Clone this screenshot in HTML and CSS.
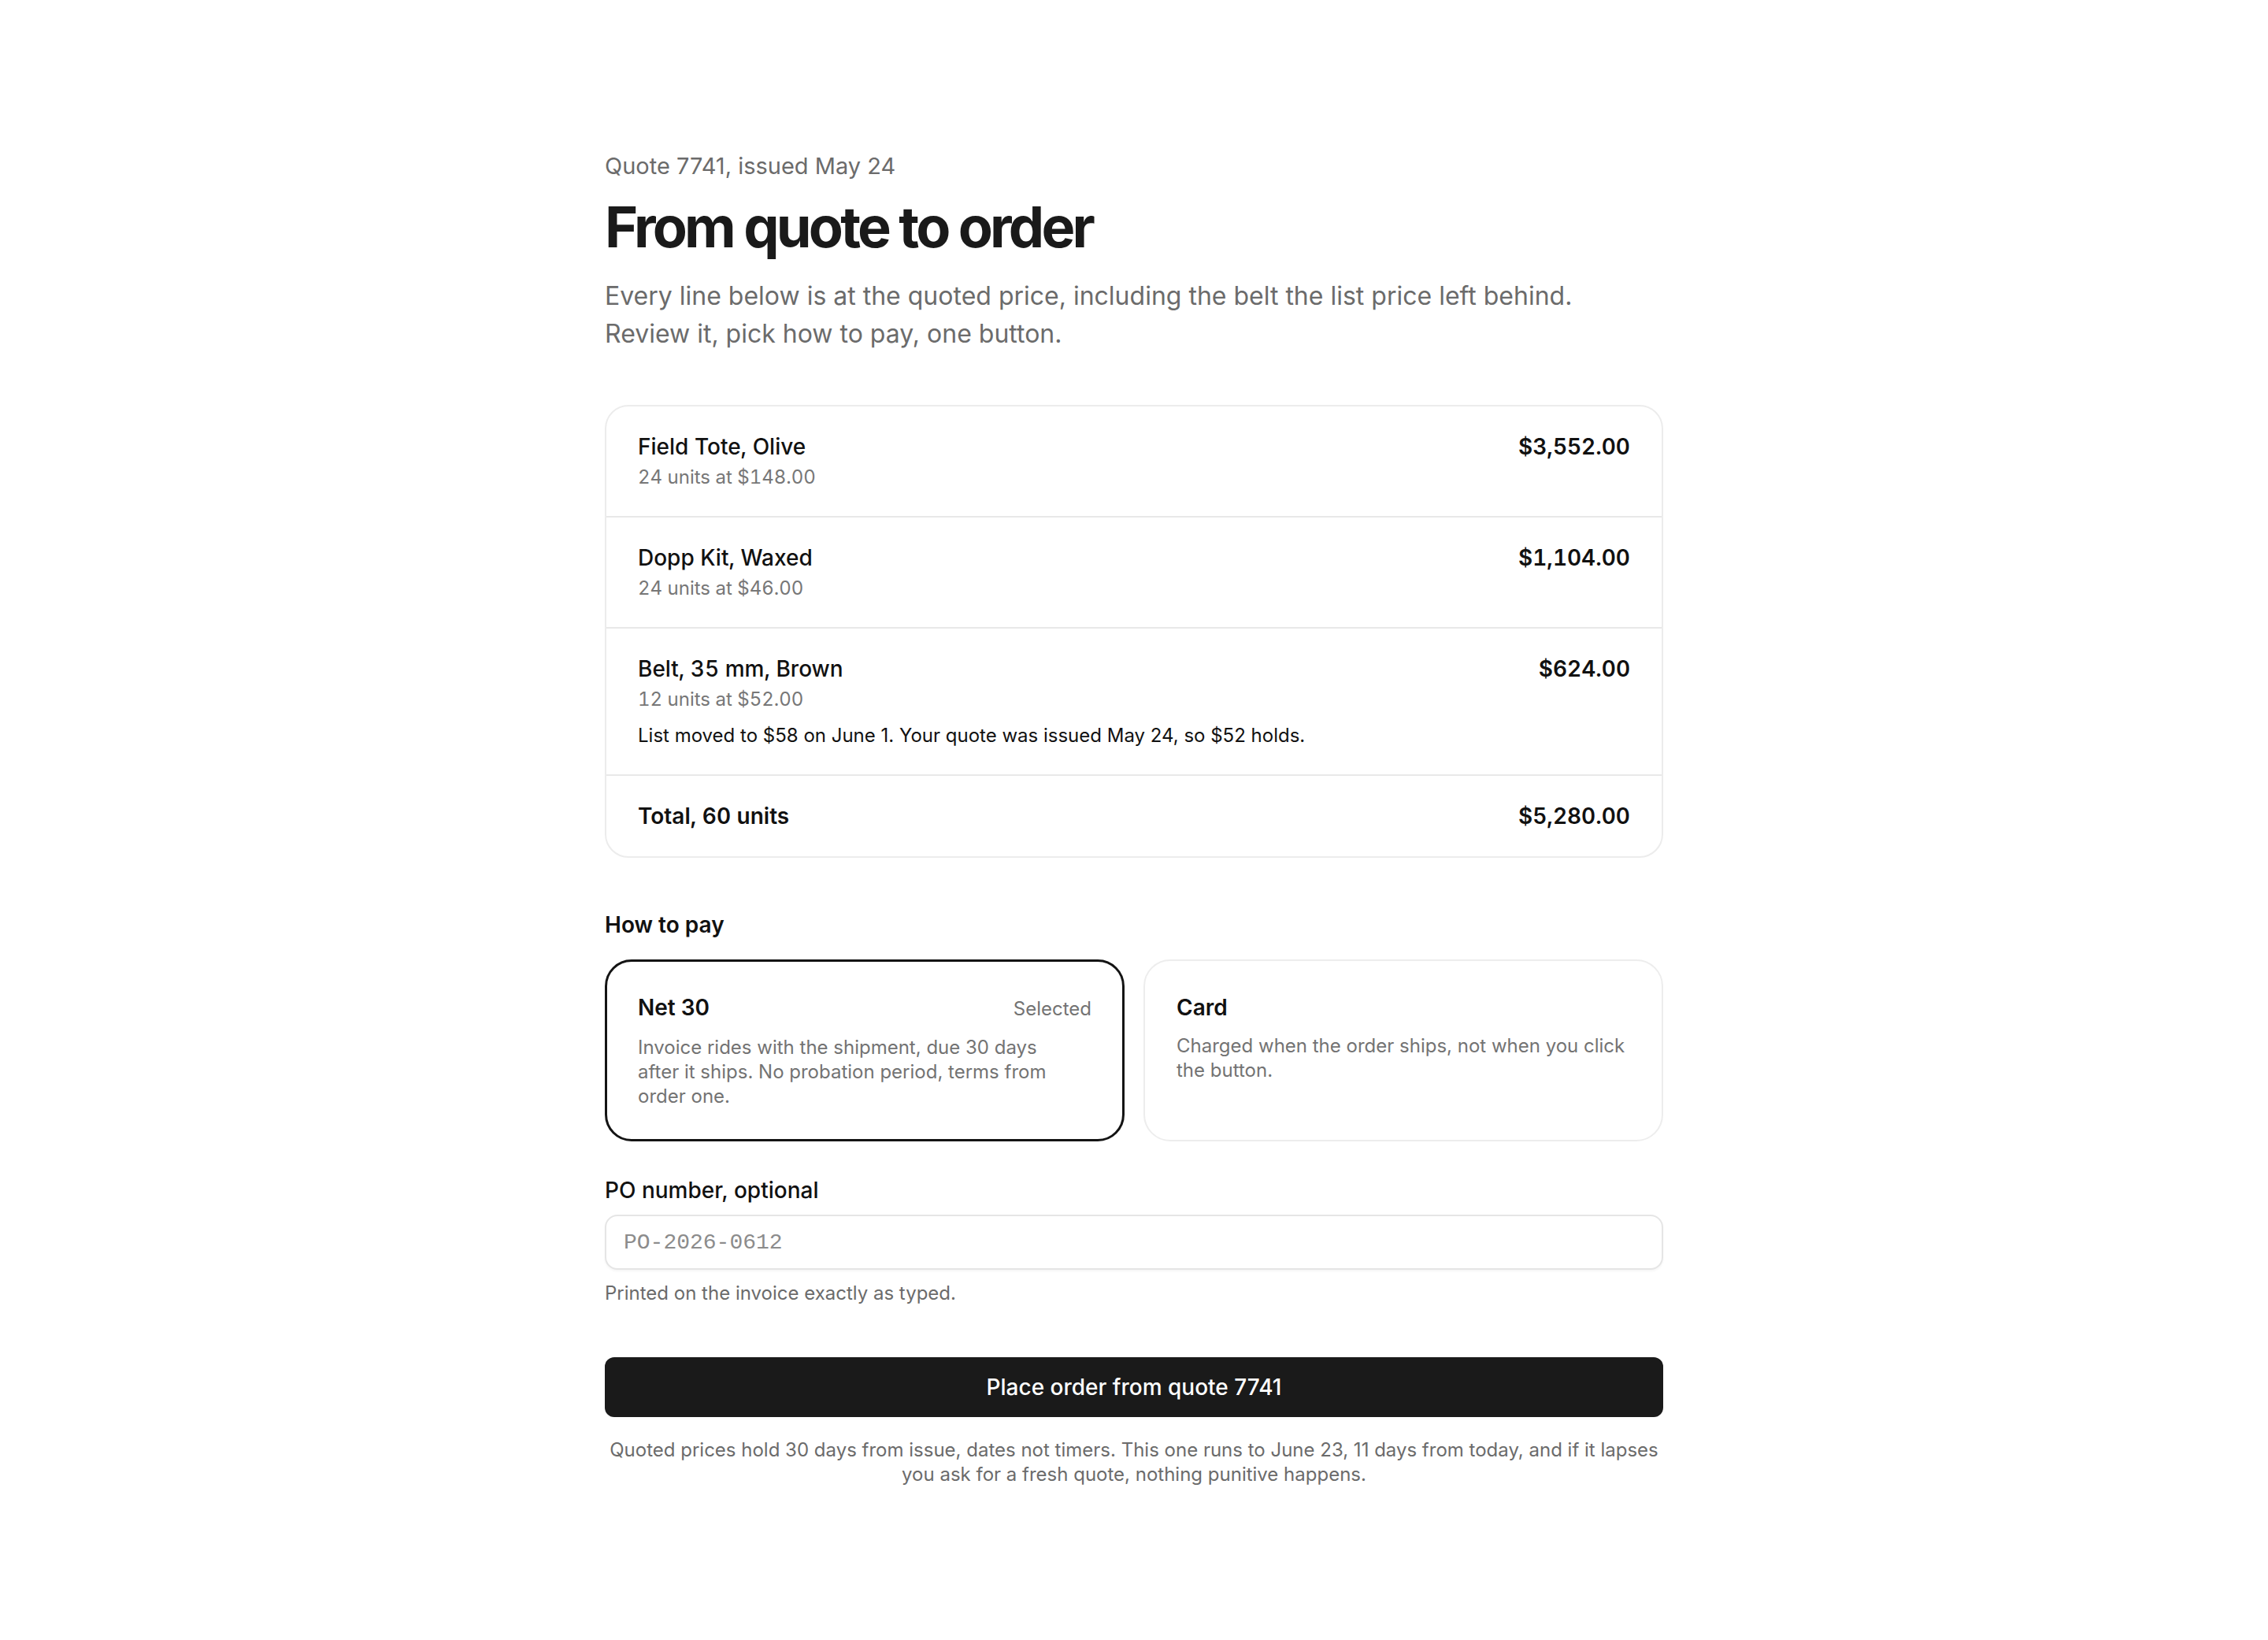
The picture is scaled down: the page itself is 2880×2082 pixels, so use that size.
FILE: index.html
```html
<!DOCTYPE html>
<html lang="en">
<head>
<meta charset="utf-8">
<title>From quote to order</title>
<link rel="stylesheet" href="styles.css">
</head>
<body>
<main class="page">
  <p class="eyebrow">Quote 7741, issued May 24</p>
  <h1 class="title">From quote to order</h1>
  <p class="lede">Every line below is at the quoted price, including the belt the list price left behind. Review it, pick how to pay, one button.</p>

  <section class="lines">
    <div class="line">
      <div class="line-info">
        <div class="line-name">Field Tote, Olive</div>
        <div class="line-sub">24 units at $148.00</div>
      </div>
      <div class="line-price">$3,552.00</div>
    </div>
    <div class="line">
      <div class="line-info">
        <div class="line-name">Dopp Kit, Waxed</div>
        <div class="line-sub">24 units at $46.00</div>
      </div>
      <div class="line-price">$1,104.00</div>
    </div>
    <div class="line">
      <div class="line-info">
        <div class="line-name">Belt, 35 mm, Brown</div>
        <div class="line-sub">12 units at $52.00</div>
        <div class="line-note">List moved to $58 on June 1. Your quote was issued May 24, so $52 holds.</div>
      </div>
      <div class="line-price">$624.00</div>
    </div>
    <div class="line line-total">
      <div class="total-label">Total, 60 units</div>
      <div class="line-price">$5,280.00</div>
    </div>
  </section>

  <h2 class="section-label">How to pay</h2>
  <div class="pay-grid">
    <div class="pay-card pay-card-selected">
      <div class="pay-head">
        <span class="pay-title">Net 30</span>
        <span class="pay-state">Selected</span>
      </div>
      <p class="pay-desc">Invoice rides with the shipment, due 30 days after it ships. No probation period, terms from order one.</p>
    </div>
    <div class="pay-card">
      <div class="pay-head">
        <span class="pay-title">Card</span>
      </div>
      <p class="pay-desc">Charged when the order ships, not when you click the button.</p>
    </div>
  </div>

  <label class="field-label" for="po">PO number, optional</label>
  <input class="field-input" id="po" type="text" placeholder="PO-2026-0612">
  <p class="field-hint">Printed on the invoice exactly as typed.</p>

  <button class="cta" type="button">Place order from quote 7741</button>
  <p class="footnote">Quoted prices hold 30 days from issue, dates not timers. This one runs to June 23, 11 days from today, and if it lapses you ask for a fresh quote, nothing punitive happens.</p>
</main>
</body>
</html>
```

FILE: styles.css
```css
* { box-sizing: border-box; }

html, body {
  margin: 0;
  padding: 0;
  background: #ffffff;
}

body {
  font-family: Inter, "Noto Sans", "Liberation Sans", sans-serif;
  color: #1a1a1a;
}

.page {
  width: 1344px;
  margin: 0 auto;
  padding: 190px 0 120px;
  display: flex;
  flex-direction: column;
}

.eyebrow {
  margin: 0;
  font-size: 29px;
  line-height: 42px;
  color: #6b6b6b;
}

.title {
  margin: 16px 0 0;
  font-size: 72px;
  line-height: 80px;
  font-weight: 700;
  letter-spacing: -0.053em;
  color: #1a1a1a;
}

.lede {
  margin: 24px 0 0;
  font-size: 32px;
  line-height: 48px;
  color: #6b6b6b;
}

.lines {
  margin-top: 66px;
  border: 2px solid #ececec;
  border-radius: 30px;
  display: flex;
  flex-direction: column;
  font-variant-numeric: tabular-nums;
}

.line {
  display: flex;
  justify-content: space-between;
  align-items: flex-start;
  padding: 33px 40px 32px;
  border-bottom: 2px solid #e8e8e8;
}

.line-total {
  border-bottom: none;
  padding: 33px 40px 33px;
}

.line-name {
  font-size: 28px;
  line-height: 36px;
  font-weight: 500;
  color: #111111;
}

.line-sub {
  margin-top: 4px;
  font-size: 24px;
  line-height: 34px;
  color: #777777;
}

.line-note {
  margin-top: 12px;
  font-size: 24px;
  line-height: 34px;
  color: #111111;
  font-variant-numeric: normal;
}

.line-price {
  font-size: 28px;
  line-height: 36px;
  font-weight: 600;
  color: #111111;
}

.total-label {
  font-size: 28px;
  line-height: 36px;
  font-weight: 600;
  color: #111111;
}

.section-label {
  margin: 67px 0 0;
  font-size: 28px;
  line-height: 36px;
  font-weight: 600;
  color: #111111;
}

.pay-grid {
  margin-top: 26px;
  display: grid;
  grid-template-columns: 1fr 1fr;
  gap: 24px;
}

.pay-card {
  border: 2px solid #ededed;
  border-radius: 34px;
  padding: 41px 40px 40px;
}

.pay-card-selected {
  border: 3px solid #141414;
  padding: 40px 39px 39px;
}

.pay-card-selected .pay-desc {
  padding-right: 24px;
}

.pay-head {
  display: flex;
  justify-content: space-between;
  align-items: baseline;
}

.pay-title {
  font-size: 28px;
  line-height: 36px;
  font-weight: 600;
  color: #111111;
}

.pay-state {
  font-size: 24px;
  line-height: 36px;
  color: #737373;
}

.pay-desc {
  margin: 15px 0 0;
  font-size: 24px;
  line-height: 31px;
  color: #737373;
}

.field-label {
  margin-top: 44px;
  font-size: 28px;
  line-height: 36px;
  font-weight: 500;
  color: #111111;
}

.field-input {
  margin-top: 13px;
  width: 100%;
  height: 70px;
  border: 2px solid #e5e5e5;
  border-radius: 16px;
  padding: 0 22px;
  font-family: "Liberation Mono", "DejaVu Sans Mono", monospace;
  font-size: 28px;
  color: #111111;
  background: #ffffff;
  box-shadow: 0 2px 3px rgba(0, 0, 0, 0.04);
  outline: none;
}

.field-input::placeholder {
  color: #8c8c8c;
}

.field-hint {
  margin: 14px 0 0;
  font-size: 24px;
  line-height: 32px;
  color: #6b6b6b;
}

.cta {
  margin-top: 65px;
  width: 100%;
  height: 76px;
  border: none;
  border-radius: 12px;
  background: #1a1a1a;
  color: #ffffff;
  font-family: Inter, "Noto Sans", "Liberation Sans", sans-serif;
  font-size: 28px;
  font-weight: 500;
  cursor: pointer;
}

.footnote {
  margin: 26px 0 0;
  font-size: 24px;
  line-height: 31px;
  color: #6b6b6b;
  text-align: center;
}
```
